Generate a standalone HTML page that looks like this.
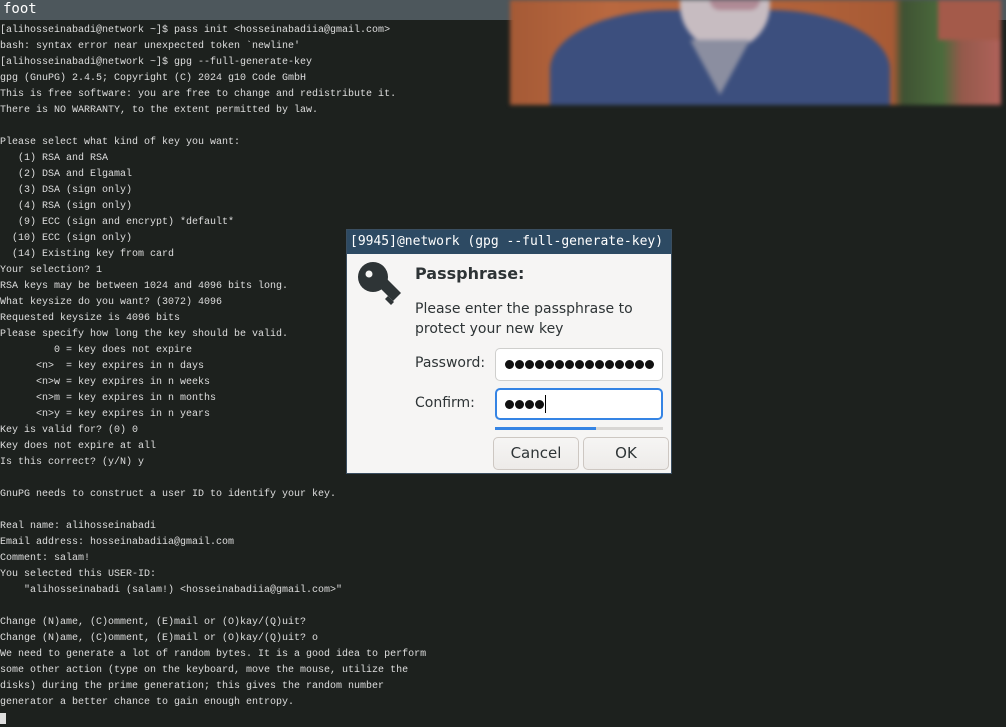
<!DOCTYPE html>
<html><head><meta charset="utf-8"><style>
*{margin:0;padding:0;box-sizing:border-box}
body{width:1006px;height:727px;background:#1d211e;overflow:hidden;position:relative;font-family:"Liberation Mono","DejaVu Sans Mono",monospace}
#title{position:absolute;left:0;top:0;width:1006px;height:20px;background:#4d575c;color:#fff;font-size:14px;line-height:18px;padding-left:3px;font-family:"DejaVu Sans Mono",monospace}
pre{position:absolute;left:0;top:23px;color:#dedede;font-size:10px;line-height:16px;font-family:"Liberation Mono",monospace}
#cam{position:absolute;left:510px;top:0;width:491px;height:105px;overflow:hidden;background:linear-gradient(90deg,#a55a36 0%,#b9683f 20%,#b06139 60%,#a75a35 78%,#3f5233 80%,#4b6b3c 88%,#94594b 92%,#b0625a 100%);filter:blur(2px)}
#dlg{position:absolute;left:346px;top:229px;width:326px;height:245px;background:#f6f5f4;border:1px solid #3a4e60}
#dlg .t{height:24px;background:#2d4a63;color:#fff;font-family:"DejaVu Sans Mono",monospace;font-size:13px;line-height:24px;padding-left:3px;white-space:nowrap}
.s{font-family:"DejaVu Sans","Liberation Sans",sans-serif;color:#2e3436;position:absolute}
.inp{position:absolute;left:148px;width:168px;background:#fff;border:1px solid #cfcfcd;border-radius:5px;padding-left:9px;display:flex;align-items:center}
.d{width:9px;height:9px;border-radius:50%;background:#111;margin-right:1px;flex:none}
.btn{position:absolute;top:207px;height:33px;border:1px solid #cdc7c2;border-radius:5px;background:linear-gradient(#f6f5f4,#edebe9);font-family:"DejaVu Sans",sans-serif;font-size:15px;color:#2e3436;text-align:center;line-height:31px}
</style></head><body>
<div id="title">foot</div>
<div id="cam">
<div style="position:absolute;left:40px;top:10px;width:340px;height:105px;background:#3c4f7e;border-radius:120px 120px 0 0/60px 60px 0 0"></div>
<div style="position:absolute;left:170px;top:-10px;width:90px;height:60px;background:#c7bcc1;border-radius:0 0 45px 45px"></div>
<div style="position:absolute;left:180px;top:40px;width:60px;height:55px;background:#8b8ea0;clip-path:polygon(0 0,100% 0,50% 100%)"></div>
<div style="position:absolute;left:200px;top:0;width:50px;height:10px;background:#b08a95;border-radius:0 0 20px 20px"></div>
<div style="position:absolute;left:428px;top:0;width:63px;height:40px;background:#a45a4a"></div>
</div>
<pre>[alihosseinabadi@network ~]$ pass init &lt;hosseinabadiia@gmail.com&gt;
bash: syntax error near unexpected token `newline'
[alihosseinabadi@network ~]$ gpg --full-generate-key
gpg (GnuPG) 2.4.5; Copyright (C) 2024 g10 Code GmbH
This is free software: you are free to change and redistribute it.
There is NO WARRANTY, to the extent permitted by law.

Please select what kind of key you want:
   (1) RSA and RSA
   (2) DSA and Elgamal
   (3) DSA (sign only)
   (4) RSA (sign only)
   (9) ECC (sign and encrypt) *default*
  (10) ECC (sign only)
  (14) Existing key from card
Your selection? 1
RSA keys may be between 1024 and 4096 bits long.
What keysize do you want? (3072) 4096
Requested keysize is 4096 bits
Please specify how long the key should be valid.
         0 = key does not expire
      &lt;n&gt;  = key expires in n days
      &lt;n&gt;w = key expires in n weeks
      &lt;n&gt;m = key expires in n months
      &lt;n&gt;y = key expires in n years
Key is valid for? (0) 0
Key does not expire at all
Is this correct? (y/N) y

GnuPG needs to construct a user ID to identify your key.

Real name: alihosseinabadi
Email address: hosseinabadiia@gmail.com
Comment: salam!
You selected this USER-ID:
    "alihosseinabadi (salam!) &lt;hosseinabadiia@gmail.com&gt;"

Change (N)ame, (C)omment, (E)mail or (O)kay/(Q)uit?
Change (N)ame, (C)omment, (E)mail or (O)kay/(Q)uit? o
We need to generate a lot of random bytes. It is a good idea to perform
some other action (type on the keyboard, move the mouse, utilize the
disks) during the prime generation; this gives the random number
generator a better chance to gain enough entropy.
<span style="background:#dedede">&nbsp;</span></pre>
<div id="dlg">
<div class="t">[9945]@network (gpg --full-generate-key)</div>
<svg style="position:absolute;left:11px;top:32px" width="45" height="46" viewBox="0 0 45 46"><circle cx="15" cy="15" r="15" fill="#2e3436"/><circle cx="11" cy="12" r="3.5" fill="#f6f5f4"/><path d="M20 24 L28 16 L43 31 L35 39 Z" fill="#2e3436"/><path d="M30 34 L36 40 L33 43 L27 37 Z" fill="#2e3436"/></svg>
<div class="s" style="left:68px;top:34px;font-size:16px;font-weight:bold">Passphrase:</div>
<div class="s" style="left:68px;top:69px;font-size:14px;line-height:20px">Please enter the passphrase to<br>protect your new key</div>
<div class="s" style="left:68px;top:125px;font-size:14px">Password:</div>
<div class="s" style="left:68px;top:165px;font-size:14px">Confirm:</div>
<div class="inp" style="top:118px;height:33px"><i class="d"></i><i class="d"></i><i class="d"></i><i class="d"></i><i class="d"></i><i class="d"></i><i class="d"></i><i class="d"></i><i class="d"></i><i class="d"></i><i class="d"></i><i class="d"></i><i class="d"></i><i class="d"></i><i class="d"></i></div>
<div class="inp" style="top:158px;height:32px;border:2px solid #3584e4;padding-left:8px"><i class="d"></i><i class="d"></i><i class="d"></i><i class="d"></i><span style="width:1px;height:18px;background:#000;flex:none"></span></div>
<div style="position:absolute;left:148px;top:197px;width:168px;height:3px;background:#d8d6d4"><div style="width:101px;height:3px;background:#3584e4"></div></div>
<div class="btn" style="left:146px;width:86px">Cancel</div>
<div class="btn" style="left:236px;width:86px">OK</div>
</div>
</body></html>
